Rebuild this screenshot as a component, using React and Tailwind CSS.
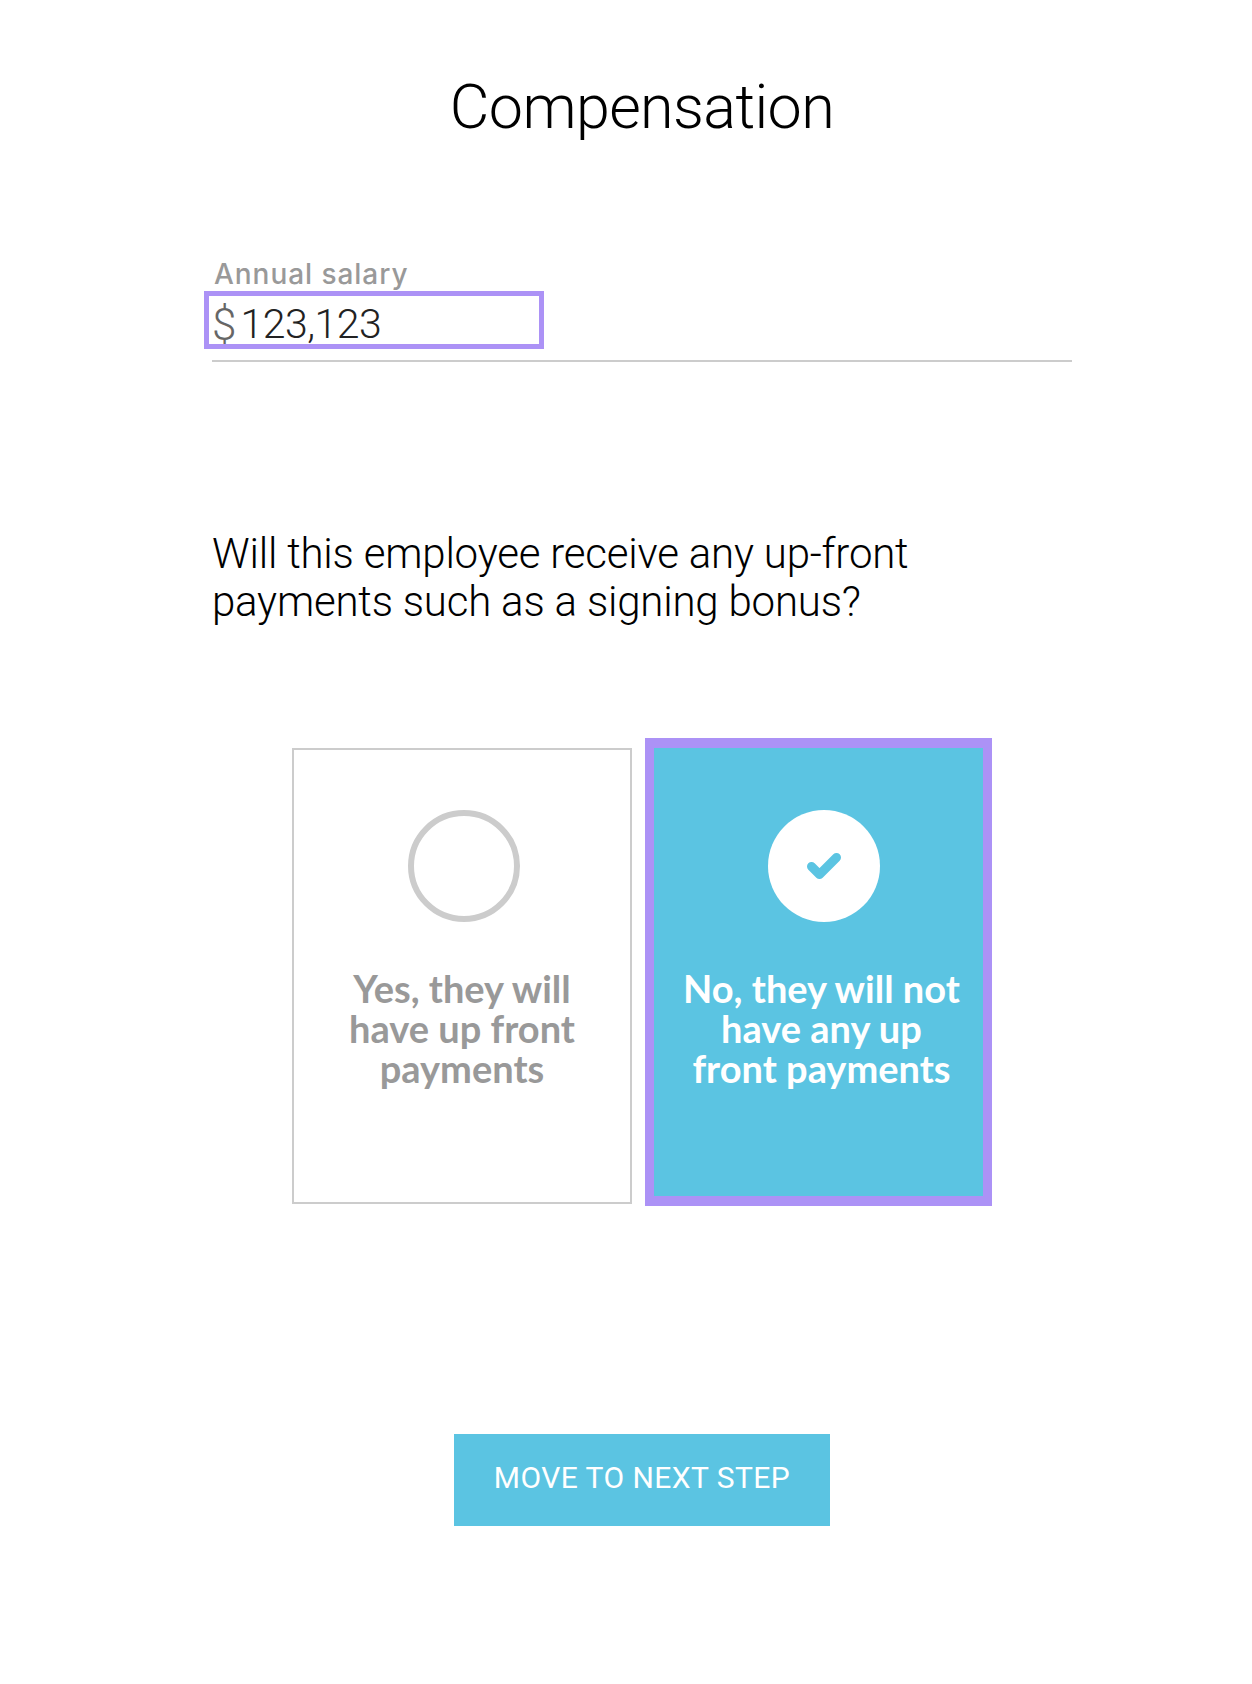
function CheckIcon() {
  return (
    <svg width="34" height="27" viewBox="0 0 34 27" fill="none">
      <path
        d="M4.5 13.5 L12.5 21.5 L29.5 4.5"
        stroke="#5bc4e2"
        strokeWidth="9"
        strokeLinecap="round"
        strokeLinejoin="round"
      />
    </svg>
  );
}

function App() {
  return (
    <div className="h-[1684px] w-[1252px] overflow-hidden bg-white font-['Roboto',sans-serif]">
      <div className="ml-[212px] w-[860px]">
        <h1 className="pt-[71px] text-center text-[61px] leading-[72px] font-light tracking-[-0.6px] text-black">
          Compensation
        </h1>

        <div className="mt-[114px]">
          <label className="ml-[2px] block font-['Inter',sans-serif] text-[28px] leading-[34px] font-medium tracking-[0.95px] text-[#999999]">
            Annual salary
          </label>
          <div className="h-[58px]">
            <div className="-ml-[8px] flex h-[58px] w-[340px] items-center border-[5px] border-[#ac92f6] pt-[9px] pl-[3px]">
              <span className="text-[44px] leading-none font-light text-[#666666]">$</span>
              <span className="ml-[4px] text-[41px] leading-none font-light tracking-[-0.5px] text-[#222222]">
                123,123
              </span>
            </div>
          </div>
          <div className="mt-[11px] h-[2px] bg-[#cccccc]" />
        </div>

        <p className="mt-[168px] text-[42px] leading-[48px] font-light tracking-[-0.2px] text-black">
          Will this employee receive any up-front
          <br />
          payments such as a signing bonus?
        </p>

        <div className="mt-[112px] ml-[80px] flex items-start gap-[13px]">
          <div className="mt-[10px] flex h-[456px] w-[340px] flex-col items-center border-2 border-[#cccccc] pt-[60px]">
            <div className="ml-[4px] h-[112px] w-[112px] rounded-full border-[6px] border-[#cccccc]" />
            <p className="mt-[46px] text-center font-['Lato',sans-serif] text-[38px] leading-[40px] font-bold text-[#999999]">
              Yes, they will
              <br />
              have up front
              <br />
              payments
            </p>
          </div>

          <div className="flex h-[468px] w-[347px] flex-col items-center border-x-[9px] border-y-[10px] border-[#ac92f6] bg-[#5bc4e2] pt-[62px]">
            <div className="ml-[10px] flex h-[112px] w-[112px] items-center justify-center rounded-full bg-white">
              <CheckIcon />
            </div>
            <p className="mt-[46px] ml-[6px] text-center font-['Lato',sans-serif] text-[38px] leading-[40px] font-bold text-white">
              No, they will not
              <br />
              have any up
              <br />
              front payments
            </p>
          </div>
        </div>

        <button
          type="button"
          className="mt-[228px] ml-[242px] h-[92px] w-[376px] bg-[#5bc4e2] pb-[5px] text-[30px] font-normal tracking-[0.45px] text-white"
        >
          MOVE TO NEXT STEP
        </button>
      </div>
    </div>
  );
}

export default App;
